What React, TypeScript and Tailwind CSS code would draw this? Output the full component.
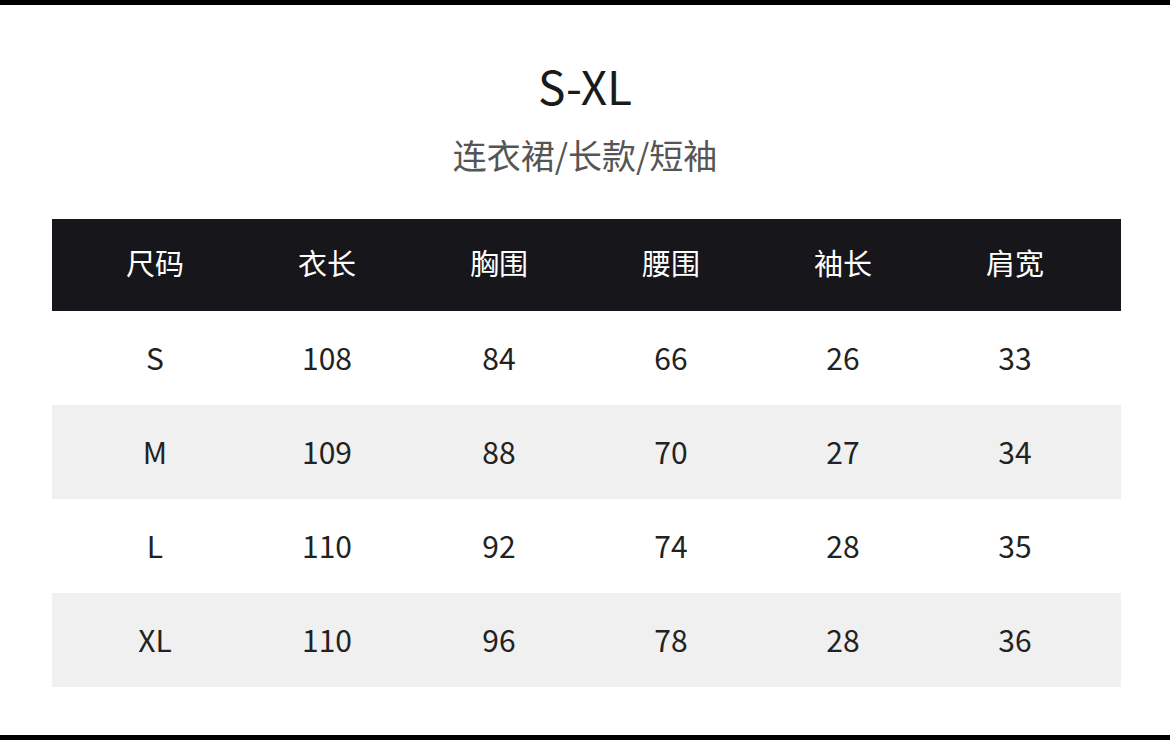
import React from "react";

const headers = ["尺码", "衣长", "胸围", "腰围", "袖长", "肩宽"];
const rows = [
  ["S", "108", "84", "66", "26", "33"],
  ["M", "109", "88", "70", "27", "34"],
  ["L", "110", "92", "74", "28", "35"],
  ["XL", "110", "96", "78", "28", "36"],
];

export default function App() {
  return (
    <div
      className="w-[1170px] h-[740px] bg-white flex flex-col overflow-hidden"
      style={{ fontFamily: '"Noto Sans CJK SC", "Noto Sans", sans-serif' }}
    >
      <div className="h-[5px] bg-black shrink-0" />
      <div className="mt-[55px] h-[50px] leading-[50px] text-center text-[46px] text-[#1a1a1a]">
        S-XL
      </div>
      <div className="mt-[25px] h-[40px] leading-[40px] text-center text-[34px] text-[#555555]">
        连衣裙/长款/短袖
      </div>
      <div className="mt-[44px] ml-[52px] w-[1069px] flex flex-col">
        <div className="h-[92px] bg-[#17171b] grid grid-cols-[repeat(6,172px)] pl-[17px] pb-[5px] items-center">
          {headers.map((h) => (
            <div key={h} className="text-center text-[29px] text-white">
              {h}
            </div>
          ))}
        </div>
        {rows.map((r, i) => (
          <div
            key={r[0]}
            className={`h-[94px] grid grid-cols-[repeat(6,172px)] pl-[17px] pb-[2px] items-center ${
              i % 2 === 1 ? "bg-[#f0f0f0]" : "bg-white"
            }`}
          >
            {r.map((c, j) => (
              <div key={j} className="text-center text-[30px] text-[#222222]">
                {c}
              </div>
            ))}
          </div>
        ))}
      </div>
      <div className="flex-1" />
      <div className="h-[5px] bg-black shrink-0" />
    </div>
  );
}
